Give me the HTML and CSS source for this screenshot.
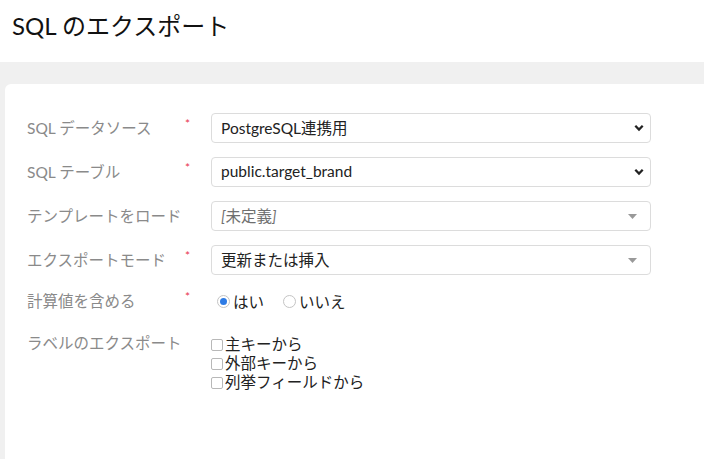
FILE: index.html
```html
<!DOCTYPE html>
<html lang="ja">
<head>
    <meta charset="UTF-8">
    <meta name="viewport" content="width=device-width, initial-scale=1.0">
    <title>SQL のエクスポート</title>
    <link rel="stylesheet" href="styles.css">
</head>
<body>
    <div class="page-header">
        <h1 class="page-title">SQL のエクスポート</h1>
    </div>
    <div class="card">
        <div class="form-row">
            <div class="label">SQL データソース</div>
            <div class="required">*</div>
            <div class="select">
                <span class="value">PostgreSQL連携用</span>
                <svg class="chevron" width="10" height="8" viewBox="0 0 10 8"><path d="M1.3 1.8 L5 5.5 L8.7 1.8" fill="none" stroke="#222" stroke-width="2.3"/></svg>
            </div>
        </div>
        <div class="form-row">
            <div class="label">SQL テーブル</div>
            <div class="required">*</div>
            <div class="select">
                <span class="value">public.target_brand</span>
                <svg class="chevron" width="10" height="8" viewBox="0 0 10 8"><path d="M1.3 1.8 L5 5.5 L8.7 1.8" fill="none" stroke="#222" stroke-width="2.3"/></svg>
            </div>
        </div>
        <div class="form-row">
            <div class="label">テンプレートをロード</div>
            <div class="required"></div>
            <div class="select">
                <span class="value placeholder"><i>[</i>未定義<i>]</i></span>
                <svg class="caret" width="9" height="5" viewBox="0 0 9 5"><path d="M0 0 H9 L4.5 5 Z" fill="#999"/></svg>
            </div>
        </div>
        <div class="form-row">
            <div class="label">エクスポートモード</div>
            <div class="required">*</div>
            <div class="select">
                <span class="value">更新または挿入</span>
                <svg class="caret" width="9" height="5" viewBox="0 0 9 5"><path d="M0 0 H9 L4.5 5 Z" fill="#999"/></svg>
            </div>
        </div>
        <div class="form-row short">
            <div class="label">計算値を含める</div>
            <div class="required">*</div>
            <div class="radio-group">
                <label class="radio-item"><span class="radio checked"></span>はい</label>
                <label class="radio-item"><span class="radio"></span>いいえ</label>
            </div>
        </div>
        <div class="form-row top">
            <div class="label">ラベルのエクスポート</div>
            <div class="required"></div>
            <div class="check-list">
                <label class="check-item"><span class="checkbox"></span>主キーから</label>
                <label class="check-item"><span class="checkbox"></span>外部キーから</label>
                <label class="check-item"><span class="checkbox"></span>列挙フィールドから</label>
            </div>
        </div>
    </div>
</body>
</html>
```

FILE: styles.css
```css
body {
    margin: 0;
    background-color: #f0f0f0;
    font-family: Lato, "Noto Sans CJK JP", sans-serif;
    color: #222;
    height: 459px;
    overflow: hidden;
}
.page-header {
    background-color: #fff;
    height: 62px;
    display: flex;
    align-items: center;
    padding-left: 12px;
}
.page-title {
    margin: 0;
    font-size: 24px;
    font-weight: normal;
    color: #111;
    position: relative;
    top: -7px;
}
.card {
    background-color: #fff;
    margin: 22px 0 0 5px;
    border-radius: 6px 0 0 0;
    height: 346px;
    padding: 29px 0 0 22px;
    display: flex;
    flex-direction: column;
    gap: 14px;
}
.form-row {
    display: grid;
    grid-template-columns: 158px 26px 440px;
    align-items: center;
    height: 30px;
    font-size: 15.5px;
}
.form-row.short {
    height: 24px;
}
.form-row.top {
    align-items: start;
    height: auto;
    margin-top: 8px;
    line-height: 19px;
}
.label {
    color: #8a8a8a;
    position: relative;
    top: -1px;
}
.required {
    color: #e8344e;
    font-size: 12px;
    position: relative;
    top: -5px;
}
.select {
    height: 28px;
    border: 1px solid #dcdcdc;
    border-radius: 4px;
    display: flex;
    align-items: center;
    justify-content: space-between;
    padding: 0 6px 0 9px;
}
.value {
    color: #222;
    position: relative;
    top: -1px;
}
.value.placeholder {
    color: #6f6f6f;
}
.caret {
    margin-right: 7px;
}
.radio-group {
    display: flex;
    gap: 19px;
    margin-left: 6px;
}
.radio-item {
    display: flex;
    align-items: center;
    color: #222;
}
.radio {
    width: 11px;
    height: 11px;
    border: 1px solid #c4c4c4;
    border-radius: 50%;
    margin-right: 3px;
    position: relative;
}
.radio.checked::after {
    content: "";
    position: absolute;
    left: 2px;
    top: 2px;
    width: 7px;
    height: 7px;
    border-radius: 50%;
    background-color: #2d7be5;
}
.check-list {
    display: flex;
    flex-direction: column;
}
.check-item {
    display: flex;
    align-items: center;
    color: #222;
}
.checkbox {
    width: 10px;
    height: 10px;
    border: 1px solid #b8b8b8;
    border-radius: 2px;
    margin-right: 2px;
}
```
